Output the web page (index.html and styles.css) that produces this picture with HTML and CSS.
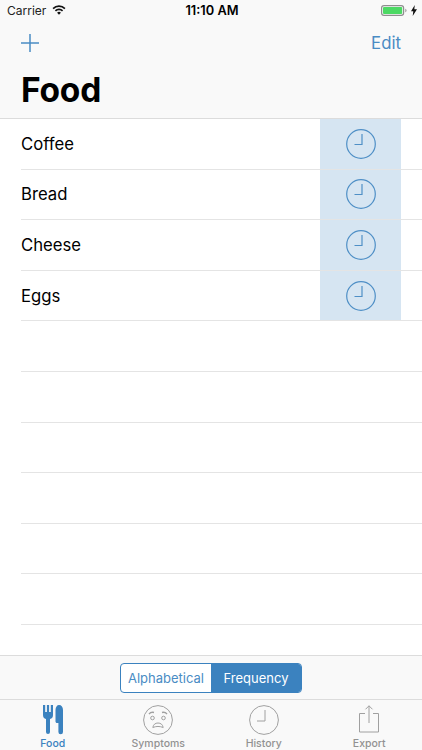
FILE: index.html
```html
<!DOCTYPE html>
<html lang="en">
<head>
<meta charset="utf-8">
<title>Food</title>
<link rel="stylesheet" href="styles.css">
</head>
<body>
<div class="app">
  <header class="header">
    <div class="status">
      <div class="status-left">
        <span>Carrier</span>
        <svg class="wifi" viewBox="0 0 16 12"><path d="M8 11.600 5.700 9.200a3.300 3.300 0 0 1 4.600 0zM4.400 7.900 3 6.400a7 7 0 0 1 10 0l-1.400 1.500a5.100 5.100 0 0 0-7.200 0zM1.600 5.100 .2 3.600a11 11 0 0 1 15.600 0l-1.400 1.500a9 9 0 0 0-12.800 0z" fill="#111"/></svg>
      </div>
      <div class="status-time">11:10 AM</div>
      <div class="status-right">
        <svg class="battery" viewBox="0 0 26 11"><rect x=".6" y=".6" width="22" height="9.800" rx="2.400" fill="none" stroke="#8e8e8e" stroke-width="1.200"/><rect x="2" y="2" width="19.200" height="7" rx="1" fill="#4cd964"/><path d="M24.400 3.800v3.400c.7-.2 1.100-.9 1.100-1.700s-.4-1.500-1.100-1.700z" fill="#8e8e8e"/></svg>
        <svg class="bolt" viewBox="0 0 6 11"><path d="M3.800 0 0 6.300h2.300L1.700 11 6 4.300H3.300z" fill="#111"/></svg>
      </div>
    </div>
    <div class="nav">
      <svg class="plus" viewBox="0 0 18 18"><path d="M9 0v18M0 9h18" stroke="#4a8cc4" stroke-width="1.500" fill="none"/></svg>
      <span class="edit">Edit</span>
    </div>
    <h1 class="title">Food</h1>
  </header>
  <main class="list">
    <div class="row"><span class="row-label">Coffee</span><span class="row-action"><svg class="clock" viewBox="0 0 30 30"><circle cx="15" cy="15" r="14.300"/><path d="M16 5v10.500H8.500"/></svg></span></div>
    <div class="row"><span class="row-label">Bread</span><span class="row-action"><svg class="clock" viewBox="0 0 30 30"><circle cx="15" cy="15" r="14.300"/><path d="M16 5v10.500H8.500"/></svg></span></div>
    <div class="row"><span class="row-label">Cheese</span><span class="row-action"><svg class="clock" viewBox="0 0 30 30"><circle cx="15" cy="15" r="14.300"/><path d="M16 5v10.500H8.500"/></svg></span></div>
    <div class="row"><span class="row-label">Eggs</span><span class="row-action"><svg class="clock" viewBox="0 0 30 30"><circle cx="15" cy="15" r="14.300"/><path d="M16 5v10.500H8.500"/></svg></span></div>
    <div class="row"></div>
    <div class="row"></div>
    <div class="row"></div>
    <div class="row"></div>
    <div class="row"></div>
    <div class="row"></div>
  </main>
  <div class="toolbar">
    <div class="segmented">
      <span class="seg">Alphabetical</span>
      <span class="seg seg-on">Frequency</span>
    </div>
  </div>
  <nav class="tabs">
    <div class="tab tab-on">
      <svg class="tab-icon" viewBox="0 0 30 30"><path fill="#3b82bf" d="M5 0h2.200v7h1.700V0h2.200v7h1.700V0H15v10c0 2.500-1 3.500-3 4v13a2 2 0 0 1-4 0V14c-2-.5-3-1.500-3-4zM21 0c2.500 0 4 2 4 5v22a2.300 2.300 0 0 1-4.600 0V18H19c-.8 0-1.500-.7-1.500-1.500V5c0-3 1.500-5 3.500-5z"/></svg>
      <span class="tab-label">Food</span>
    </div>
    <div class="tab">
      <svg class="tab-icon" viewBox="0 0 30 30" fill="none" stroke="#a0a0a0"><circle cx="15" cy="15" r="14.400"/><path d="M6 9c1.300-1.500 3-2 5-1.500M24 9c-1.300-1.500-3-2-5-1.500" stroke-width="1.400"/><circle cx="9.500" cy="13" r="1.800"/><circle cx="20.500" cy="13" r="1.800"/><path d="M9.800 22.500c.5-3 2.500-4.500 5.200-4.500s4.700 1.500 5.200 4.500c-3.400-1.400-7-1.400-10.400 0z"/></svg>
      <span class="tab-label">Symptoms</span>
    </div>
    <div class="tab">
      <svg class="tab-icon" viewBox="0 0 30 30" fill="none" stroke="#a0a0a0"><circle cx="15" cy="15" r="14.400"/><path d="M16 5v11H8"/></svg>
      <span class="tab-label">History</span>
    </div>
    <div class="tab">
      <svg class="tab-icon" viewBox="0 0 30 30" fill="none" stroke="#a0a0a0"><path d="M11 8.500H5.500v18.500h19V8.500H19M15 .8V18M11.500 4.300 15 .8l3.500 3.500"/></svg>
      <span class="tab-label">Export</span>
    </div>
  </nav>
</div>
</body>
</html>
```
FILE: styles.css
```css
* { box-sizing: border-box; }
html, body { margin: 0; padding: 0; }
body { font-family: Inter, "Liberation Sans", sans-serif; background: #fff; color: #000; }
.app { width: 422px; height: 750px; display: flex; flex-direction: column; overflow: hidden; }
.header { height: 119px; background: #f9f9f9; border-bottom: 1px solid #dcdcdc; flex: none; }
.status { height: 21px; display: grid; grid-template-columns: 1fr auto 1fr; align-items: center; padding: 0 5px 0 7px; }
.status-left { display: flex; align-items: center; gap: 6px; color: #222; font-size: 12px; }
.wifi { width: 14px; height: 10px; margin-bottom: 2px; }
.status-time { font-weight: 600; font-size: 12.800px; }
.status-right { display: flex; justify-content: flex-end; align-items: center; gap: 4px; }
.battery { width: 26px; height: 11px; }
.bolt { width: 6px; height: 11px; }
.nav { height: 44px; display: flex; justify-content: space-between; align-items: center; padding: 0 21px; }
.plus { width: 18px; height: 18px; }
.edit { color: #4a8cc4; font-size: 16.800px; }
.title { margin: 3px 0 0; padding-left: 21px; font-size: 33.500px; line-height: 44px; font-weight: 700; letter-spacing: -.2px; }
.list { flex: 1; min-height: 0; overflow: hidden; }
.row { height: 50.600px; margin-left: 21px; display: flex; justify-content: space-between; border-bottom: 1px solid #e4e4e4; }
.row-label { align-self: center; font-size: 16.700px; }
.row-action { width: 81px; margin-right: 21px; background: #d6e5f2; display: flex; align-items: center; justify-content: center; }
.clock { width: 30px; height: 30px; fill: none; stroke: #4f8fc6; stroke-width: 1.200; }
.toolbar { height: 45px; flex: none; display: flex; align-items: center; justify-content: center; background: #f9f9f9; border-top: 1px solid #dcdcdc; border-bottom: 1px solid #dcdcdc; }
.segmented { display: flex; width: 182px; height: 30px; border: 1px solid #3b82bf; border-radius: 4px; overflow: hidden; font-size: 13px; background: #fff; }
.seg { width: 91px; display: flex; align-items: center; justify-content: center; color: #4a8cc4; }
.seg-on { background: #3b82bf; color: #fff; }
.tabs { height: 50px; flex: none; display: grid; grid-template-columns: repeat(4, 105.500px); background: #f9f9f9; }
.tab { display: flex; flex-direction: column; align-items: center; padding-top: 5px; color: #929292; }
.tab-on { color: #3b82bf; }
.tab-icon { width: 30px; height: 30px; flex: none; }
.tab-label { font-size: 10.500px; font-weight: 500; margin-top: 2px; line-height: 13px; }
```
